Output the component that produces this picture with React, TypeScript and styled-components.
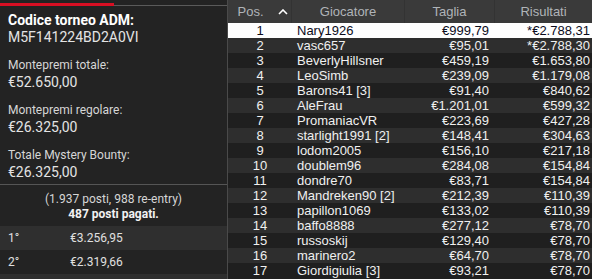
import React from 'react';
import styled, { createGlobalStyle } from 'styled-components';

const GlobalStyle = createGlobalStyle`
  html, body {
    margin: 0;
    padding: 0;
    background: #1f1f1f;
  }
`;

interface IResult {
  pos: number;
  name: string;
  bounty: string;
  result: string;
}

const results: IResult[] = [
  { pos: 1, name: 'Nary1926', bounty: '€999,79', result: '*€2.788,31' },
  { pos: 2, name: 'vasc657', bounty: '€95,01', result: '*€2.788,30' },
  { pos: 3, name: 'BeverlyHillsner', bounty: '€459,19', result: '€1.653,80' },
  { pos: 4, name: 'LeoSimb', bounty: '€239,09', result: '€1.179,08' },
  { pos: 5, name: 'Barons41 [3]', bounty: '€91,40', result: '€840,62' },
  { pos: 6, name: 'AleFrau', bounty: '€1.201,01', result: '€599,32' },
  { pos: 7, name: 'PromaniacVR', bounty: '€223,69', result: '€427,28' },
  { pos: 8, name: 'starlight1991 [2]', bounty: '€148,41', result: '€304,63' },
  { pos: 9, name: 'lodom2005', bounty: '€156,10', result: '€217,18' },
  { pos: 10, name: 'doublem96', bounty: '€284,08', result: '€154,84' },
  { pos: 11, name: 'dondre70', bounty: '€83,71', result: '€154,84' },
  { pos: 12, name: 'Mandreken90 [2]', bounty: '€212,39', result: '€110,39' },
  { pos: 13, name: 'papillon1069', bounty: '€133,02', result: '€110,39' },
  { pos: 14, name: 'baffo8888', bounty: '€277,12', result: '€78,70' },
  { pos: 15, name: 'russoskij', bounty: '€129,40', result: '€78,70' },
  { pos: 16, name: 'marinero2', bounty: '€64,70', result: '€78,70' },
  { pos: 17, name: 'Giordigiulia [3]', bounty: '€93,21', result: '€78,70' },
];

// the third row is only a sliver at the bottom edge, so it is left empty
const prizes = [
  { place: '1°', amount: '€3.256,95' },
  { place: '2°', amount: '€2.319,66' },
  { place: '', amount: '' },
];

const Screen = styled.div`
  display: flex;
  width: 592px;
  height: 279px;
  overflow: hidden;
  background: #1f1f1f;
`;

const InfoPanel = styled.div`
  width: 227px;
  flex-shrink: 0;
  background: #232323;
  border-right: 1px solid #4a4a4a;
  font-family: Roboto, 'Liberation Sans', sans-serif;
  color: #dcdcdc;
  display: flex;
  flex-direction: column;
`;

const Tabs = styled.div`
  display: flex;
  height: 6px;
  padding-top: 3px;
  box-sizing: border-box;
  border-bottom: 1px solid #5a5a5a;
`;

const Tab = styled.div<{ active: boolean }>`
  flex: 1;
  height: 3px;
  background: ${(props): string => (props.active ? '#d80f23' : 'transparent')};
`;

const InfoList = styled.div`
  display: flex;
  flex-direction: column;
  gap: 11px;
  padding: 6px 8px 3px;
  border-bottom: 1px solid #555555;
`;

const InfoBlock = styled.div`
  display: flex;
  flex-direction: column;
  line-height: 17px;
`;

const Heading = styled.div`
  font-size: 14px;
  font-weight: 700;
  color: #ffffff;
`;

const Label = styled.div`
  font-size: 12px;
  color: #d6d6d6;
`;

const Value = styled.div`
  font-size: 14px;
  color: #e4e4e4;
`;

const Summary = styled.div`
  padding: 7px 0 4px;
  text-align: center;
  font-size: 12px;
  line-height: 15px;
  color: #d6d6d6;
`;

const Paid = styled.div`
  font-weight: 700;
  color: #f2f2f2;
`;

const PrizeRow = styled.div<{ shaded: boolean }>`
  display: flex;
  align-items: center;
  height: 24px;
  flex-shrink: 0;
  padding-left: 8px;
  font-size: 12px;
  color: #e0e0e0;
  background: ${(props): string => (props.shaded ? '#2f2f2f' : '#232323')};
`;

const Place = styled.div`
  width: 62px;
`;

const Table = styled.div`
  flex: 1;
  display: flex;
  flex-direction: column;
  font-family: 'Liberation Sans', Arial, sans-serif;
  font-size: 13px;
`;

const HeaderRow = styled.div`
  display: grid;
  grid-template-columns: 64px 113px 90px 1fr;
  height: 23px;
  background: #3a3a3a;
  color: #b0b4b8;
`;

const HeaderCell = styled.div`
  display: flex;
  align-items: center;
  justify-content: center;
  gap: 14px;
  border-right: 1px solid #333333;
  &:first-child {
    padding-left: 6px;
  }
  &:last-child {
    border-right: none;
  }
`;

const Row = styled.div<{ selected: boolean; shaded: boolean }>`
  display: grid;
  grid-template-columns: 64px 113px 90px 1fr;
  height: 15px;
  line-height: 15px;
  flex-shrink: 0;
  color: ${(props): string => (props.selected ? '#0c0c1c' : '#f0f0f0')};
  background: ${(props): string =>
    props.selected ? '#ffffff' : props.shaded ? '#2e2e2e' : '#1f1f1f'};
`;

const PosCell = styled.div`
  text-align: center;
`;

const NameCell = styled.div`
  padding-left: 5px;
  white-space: nowrap;
`;

const MoneyCell = styled.div`
  text-align: right;
  padding-right: 6px;
  white-space: nowrap;
`;

const ResultCell = styled.div`
  text-align: right;
  padding-right: 2px;
  white-space: nowrap;
`;

const Caret = (): JSX.Element => (
  <svg width="10" height="6" viewBox="0 0 10 6">
    <path d="M1 5 L5 1 L9 5" stroke="#ffffff" strokeWidth="1.6" fill="none" />
  </svg>
);

const App: React.FC = () => (
  <Screen>
    <GlobalStyle />
    <InfoPanel>
      <Tabs>
        <Tab active />
        <Tab active={false} />
      </Tabs>
      <InfoList>
        <InfoBlock>
          <Heading>Codice torneo ADM:</Heading>
          <Value>M5F141224BD2A0VI</Value>
        </InfoBlock>
        <InfoBlock>
          <Label>Montepremi totale:</Label>
          <Value>€52.650,00</Value>
        </InfoBlock>
        <InfoBlock>
          <Label>Montepremi regolare:</Label>
          <Value>€26.325,00</Value>
        </InfoBlock>
        <InfoBlock>
          <Label>Totale Mystery Bounty:</Label>
          <Value>€26.325,00</Value>
        </InfoBlock>
      </InfoList>
      <Summary>
        <div>(1.937 posti, 988 re-entry)</div>
        <Paid>487 posti pagati.</Paid>
      </Summary>
      {prizes.map((p, i) => (
        <PrizeRow key={i} shaded={i % 2 === 0}>
          <Place>{p.place}</Place>
          <div>{p.amount}</div>
        </PrizeRow>
      ))}
    </InfoPanel>
    <Table>
      <HeaderRow>
        <HeaderCell>
          <span>Pos.</span>
          <Caret />
        </HeaderCell>
        <HeaderCell>Giocatore</HeaderCell>
        <HeaderCell>Taglia</HeaderCell>
        <HeaderCell>Risultati</HeaderCell>
      </HeaderRow>
      {results.map((r) => (
        <Row key={r.pos} selected={r.pos === 1} shaded={r.pos % 2 === 0}>
          <PosCell>{r.pos}</PosCell>
          <NameCell>{r.name}</NameCell>
          <MoneyCell>{r.bounty}</MoneyCell>
          <ResultCell>{r.result}</ResultCell>
        </Row>
      ))}
    </Table>
  </Screen>
);

export default App;
